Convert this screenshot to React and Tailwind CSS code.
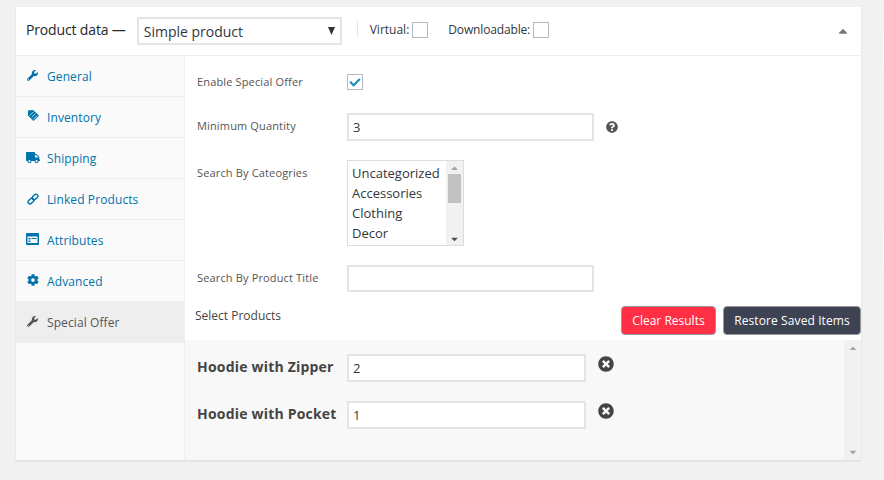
import { FaWrench, FaTruck, FaCog, FaTimesCircle, FaQuestionCircle, FaCheck, FaCaretDown, FaCaretUp } from 'react-icons/fa'

function TagIcon({ className }) {
  return (
    <svg viewBox="0 0 14 14" className={className} fill="currentColor">
      <path d="M6.5 1 13 7 7 13 1 7V1.5Z" />
      <path d="M3 7 7 3M5 9l4-4M7 11l4-4" stroke="#fafafa" strokeWidth="0.8" fill="none" />
    </svg>
  )
}

function AttrIcon({ className }) {
  return (
    <svg viewBox="0 0 13 12" className={className}>
      <rect width="13" height="12" rx="1" fill="currentColor" />
      <rect x="1.5" y="3.5" width="10" height="6.5" fill="#fafafa" />
      <rect x="2.5" y="5" width="2" height="1.5" fill="currentColor" />
      <rect x="2.5" y="7.5" width="2" height="1.5" fill="currentColor" />
      <rect x="5.5" y="5" width="5" height="1" fill="currentColor" />
    </svg>
  )
}

function ChainIcon({ className }) {
  return (
    <svg viewBox="0 0 12 12" className={className} fill="none" stroke="currentColor" strokeWidth="1.4">
      <rect x="6.1" y="0.75" width="3.8" height="6.5" rx="1.9" transform="rotate(45 8 4)" />
      <rect x="2.1" y="4.75" width="3.8" height="6.5" rx="1.9" transform="rotate(45 4 8)" />
    </svg>
  )
}

function SmallCaret({ className }) {
  return (
    <svg viewBox="0 0 7 8" className={className} fill="currentColor">
      <path d="M0 0h7L3.5 8Z" />
    </svg>
  )
}

const tabs = [
  { label: 'General', icon: <FaWrench className="mt-[-3px] h-[11px] w-[11px]" /> },
  { label: 'Inventory', icon: <TagIcon className="mt-[-5px] h-[13px] w-[13px]" /> },
  { label: 'Shipping', icon: <FaTruck className="mt-[-3px] ml-[-1px] h-[13px] w-[14px]" /> },
  { label: 'Linked Products', icon: <ChainIcon className="mt-[-3px] h-[12px] w-[12px]" /> },
  { label: 'Attributes', icon: <AttrIcon className="mt-[-4px] ml-[-1px] h-[12px] w-[13px]" /> },
  { label: 'Advanced', icon: <FaCog className="mt-[-4px] h-[12px] w-[12px]" /> },
]

function Tab({ tab }) {
  return (
    <div className="flex h-[41px] items-center border-b border-[#eeeeee] pt-[2px] pl-[11px] text-[12px] tracking-[0.1px] text-[#0073aa]">
      <span className="flex w-[20px] justify-start">{tab.icon}</span>
      <span>{tab.label}</span>
    </div>
  )
}

function TextBox({ value, className }) {
  return (
    <div className={`flex items-center border-2 border-[#e4e4e4] bg-white pt-px pl-[4px] text-[13px] text-[#32373c] ${className}`}>
      {value}
    </div>
  )
}

function ProductRow({ name, qty, className }) {
  return (
    <div className={`flex items-start ${className}`}>
      <div className="w-[162px] pt-[3px] pl-[12px] text-[14px] leading-[20px] font-bold tracking-[0.2px] whitespace-nowrap text-[#444444]">{name}</div>
      <TextBox value={qty} className="h-[28px] w-[239px]" />
      <FaTimesCircle className="mt-[2px] ml-[12px] h-[16px] w-[16px] text-[#444444]" />
    </div>
  )
}

export default function App() {
  return (
    <div className="flex h-[480px] w-[884px] items-start overflow-hidden bg-[#f1f1f1] pt-[7px] pl-[16px] font-['Open_Sans',sans-serif] text-[#444444]">
      <div className="flex h-[453px] w-[845px] flex-col bg-white shadow-[0_1px_2px_rgba(0,0,0,0.1)]">
        <div className="flex h-[49px] items-center border-b border-[#eeeeee] pl-[10px]">
          <span className="mt-[-4px] text-[14px] tracking-[-0.15px] whitespace-nowrap text-[#23282d]">Product data —</span>
          <div className="ml-[11px] flex h-[28px] w-[205px] items-center justify-between border-2 border-[#e4e4e4] pr-[5px] pl-[5px] text-[14px] text-[#32373c]">
            Simple product
            <SmallCaret className="h-[8px] w-[7px] text-[#333333]" />
          </div>
          <div className="mt-[-4px] ml-[15px] h-[16px] w-px bg-[#e5e5e5]" />
          <span className="mt-[-2px] ml-[12px] text-[12px] font-medium text-[#32373c]">Virtual:</span>
          <div className="mt-[-3px] ml-[3px] h-[16px] w-[16px] border border-[#b4b9be] bg-white" />
          <span className="mt-[-2px] ml-[20px] text-[12px] font-medium tracking-[-0.15px] text-[#32373c]">Downloadable:</span>
          <div className="mt-[-3px] ml-[3px] h-[16px] w-[16px] border border-[#b4b9be] bg-white" />
          <FaCaretUp className="mr-[12px] ml-auto h-[14px] w-[12px] text-[#72777c]" />
        </div>
        <div className="flex min-h-0 flex-1">
          <div className="w-[169px] shrink-0 border-r border-[#eeeeee] bg-[#fafafa]">
            {tabs.map((tab) => (
              <Tab key={tab.label} tab={tab} />
            ))}
            <div className="flex h-[41px] items-center bg-[#eeeeee] pt-px pl-[11px] text-[12px] tracking-[0.1px] text-[#555555]">
              <span className="flex w-[20px]">
                <FaWrench className="mt-[-3px] h-[11px] w-[11px]" />
              </span>
              Special Offer
            </div>
          </div>
          <div className="flex min-w-0 flex-1 flex-col">
            <div className="flex h-[57px] items-center pb-[5px] pl-[12px]">
              <div className="w-[150px] text-[11px] tracking-[0.15px] whitespace-nowrap text-[#555555]">Enable Special Offer</div>
              <div className="flex h-[16px] w-[16px] items-center justify-center border border-[#b4b9be] bg-white">
                <FaCheck className="h-[11px] w-[12px] text-[#1e8cbe]" />
              </div>
            </div>
            <div className="flex h-[28px] items-center pl-[12px]">
              <div className="mt-[-1px] w-[150px] text-[11px] tracking-[0.15px] whitespace-nowrap text-[#555555]">Minimum Quantity</div>
              <TextBox value="3" className="h-[28px] w-[247px]" />
              <FaQuestionCircle className="ml-[12px] h-[12px] w-[12px] text-[#555555]" />
            </div>
            <div className="mt-[19px] flex pl-[12px]">
              <div className="w-[150px] pt-[5px] text-[11px] tracking-[0.15px] whitespace-nowrap text-[#555555]">Search By Cateogries</div>
              <div className="flex h-[86px] w-[117px] border border-[#dddddd]">
                <div className="flex-1 pt-[2px] pl-[4px] text-[13px] leading-[20px] text-[#32373c]">
                  <div>Uncategorized</div>
                  <div>Accessories</div>
                  <div>Clothing</div>
                  <div>Decor</div>
                </div>
                <div className="flex w-[17px] flex-col items-center bg-[#f1f1f1]">
                  <FaCaretUp className="mt-[2px] h-[10px] w-[9px] text-[#a3a3a3]" />
                  <div className="mt-px h-[29px] w-[13px] bg-[#c1c1c1]" />
                  <FaCaretDown className="mt-auto mb-px h-[10px] w-[9px] text-[#505050]" />
                </div>
              </div>
            </div>
            <div className="mt-[19px] flex items-center pl-[12px]">
              <div className="w-[150px] text-[11px] tracking-[0.15px] whitespace-nowrap text-[#555555]">Search By Product Title</div>
              <TextBox className="h-[27px] w-[247px]" />
            </div>
            <div className="mt-[14px] flex h-[34px] items-start pl-[10px]">
              <span className="mt-px text-[12px] text-[#444444]">Select Products</span>
              <button className="mr-[7px] ml-auto h-[29px] w-[95px] rounded-[4px] border border-[#999999] bg-[#ff3045] text-[12px] text-white">
                Clear Results
              </button>
              <button className="h-[29px] w-[138px] rounded-[4px] border border-[#999999] bg-[#3e4354] text-[12px] tracking-[0.1px] text-white">
                Restore Saved Items
              </button>
            </div>
            <div className="flex min-h-0 flex-1 bg-[#f8f8f8]">
              <div className="flex-1 pt-[14px]">
                <ProductRow name="Hoodie with Zipper" qty="2" />
                <ProductRow name="Hoodie with Pocket" qty="1" className="mt-[19px]" />
              </div>
              <div className="flex w-[17px] flex-col items-center bg-[#f1f1f1] py-[3px]">
                <FaCaretUp className="h-[10px] w-[10px] text-[#a3a3a3]" />
                <FaCaretDown className="mt-auto h-[10px] w-[10px] text-[#a3a3a3]" />
              </div>
            </div>
          </div>
        </div>
      </div>
      <div className="ml-auto w-px">
        <div className="mt-[25px] h-[35px] bg-[#fafafa]" />
        <div className="mt-[164px] h-[36px] bg-[#fafafa]" />
      </div>
    </div>
  )
}
